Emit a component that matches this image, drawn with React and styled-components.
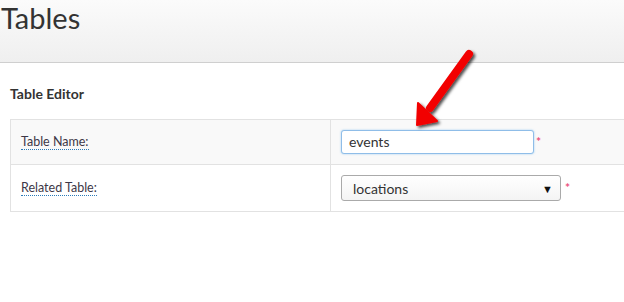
import React from "react";
import styled, { createGlobalStyle } from "styled-components";

const GlobalStyle = createGlobalStyle`
  html, body {
    margin: 0;
    padding: 0;
    background: #fff;
    overflow: hidden;
    font-family: Lato, "Open Sans", sans-serif;
    color: #333;
  }
`;

const Page = styled.div`
  position: relative;
  width: 624px;
  height: 302px;
`;

const Header = styled.div`
  box-sizing: border-box;
  height: 63px;
  background: linear-gradient(to bottom, #fbfbfb, #efefef);
  border-bottom: 1px solid #cfcfcf;
`;

const Title = styled.h1`
  margin: 0;
  padding: 0 0 0 1px;
  font-size: 29px;
  font-weight: 400;
  line-height: 35px;
  color: #333;
`;

const Content = styled.div`
  padding: 23px 0 0 10px;
`;

const SectionTitle = styled.h2`
  margin: 0 0 17px 0;
  font-size: 14px;
  font-weight: 700;
  line-height: 16px;
  color: #333;
`;

const Table = styled.div`
  width: 640px;
  border: 1px solid #e2e2e2;
  border-right: none;
`;

const Row = styled.div`
  display: flex;
  height: ${(p) => p.$height}px;
  background: ${(p) => (p.$striped ? "#f9f9f9" : "#fff")};
  border-top: ${(p) => (p.$first ? "none" : "1px solid #e2e2e2")};
`;

const LabelCell = styled.div`
  width: 309px;
  padding-left: 10px;
  display: flex;
  align-items: center;
  border-right: 1px solid #e2e2e2;
`;

const Label = styled.span`
  font-size: 12.5px;
  color: #3d3747;
  border-bottom: 1px dotted #2a7ab8;
  line-height: 14px;
`;

const FieldCell = styled.div`
  flex: 1;
  padding-left: 10px;
  display: flex;
  align-items: center;
`;

const TextInput = styled.div`
  box-sizing: border-box;
  width: 193px;
  height: 24px;
  border: 1px solid #8fbde8;
  border-radius: 3px;
  box-shadow: 0 0 2px rgba(82, 168, 236, 0.6);
  background: #fff;
  padding: 0 7px;
  font-size: 14px;
  line-height: 22px;
  color: #333;
`;

const Select = styled.div`
  box-sizing: border-box;
  width: 220px;
  height: 26px;
  border: 1px solid #aaa;
  border-radius: 3px;
  background: linear-gradient(to bottom, #fff, #f4f4f4);
  padding: 0 7px 0 11px;
  display: flex;
  align-items: center;
  justify-content: space-between;
  font-size: 14px;
  color: #333;
`;

const Caret = styled.span`
  font-size: 11px;
  color: #111;
`;

const Required = styled.span`
  margin-left: ${(p) => p.$gap}px;
  color: #ec4f7c;
  font-size: 12px;
  font-weight: 700;
  align-self: flex-start;
  margin-top: ${(p) => p.$top}px;
`;

const ArrowOverlay = styled.svg`
  position: absolute;
  left: 400px;
  top: 40px;
`;

export default function App() {
  return (
    <Page>
      <GlobalStyle />
      <Header>
        <Title>Tables</Title>
      </Header>
      <Content>
        <SectionTitle>Table Editor</SectionTitle>
        <Table>
          <Row $height={44} $striped $first>
            <LabelCell>
              <Label>Table Name:</Label>
            </LabelCell>
            <FieldCell>
              <TextInput>events</TextInput>
              <Required $gap={2} $top={14}>*</Required>
            </FieldCell>
          </Row>
          <Row $height={46}>
            <LabelCell>
              <Label>Related Table:</Label>
            </LabelCell>
            <FieldCell>
              <Select>
                <span>locations</span>
                <Caret>▼</Caret>
              </Select>
              <Required $gap={4} $top={15}>*</Required>
            </FieldCell>
          </Row>
        </Table>
      </Content>
      <ArrowOverlay width="90" height="100" viewBox="0 0 90 100">
        <defs>
          <filter id="sh" x="-30%" y="-30%" width="160%" height="160%">
            <feDropShadow dx="2" dy="2" stdDeviation="1.5" floodColor="#000" floodOpacity="0.7" />
          </filter>
        </defs>
        <g filter="url(#sh)">
          <line x1="69" y1="14" x2="30" y2="68" stroke="#f20000" strokeWidth="8" strokeLinecap="round" />
          <polygon points="17,85 18,63 37,81" fill="#f20000" stroke="#f20000" strokeWidth="2" strokeLinejoin="round" />
        </g>
      </ArrowOverlay>
    </Page>
  );
}
